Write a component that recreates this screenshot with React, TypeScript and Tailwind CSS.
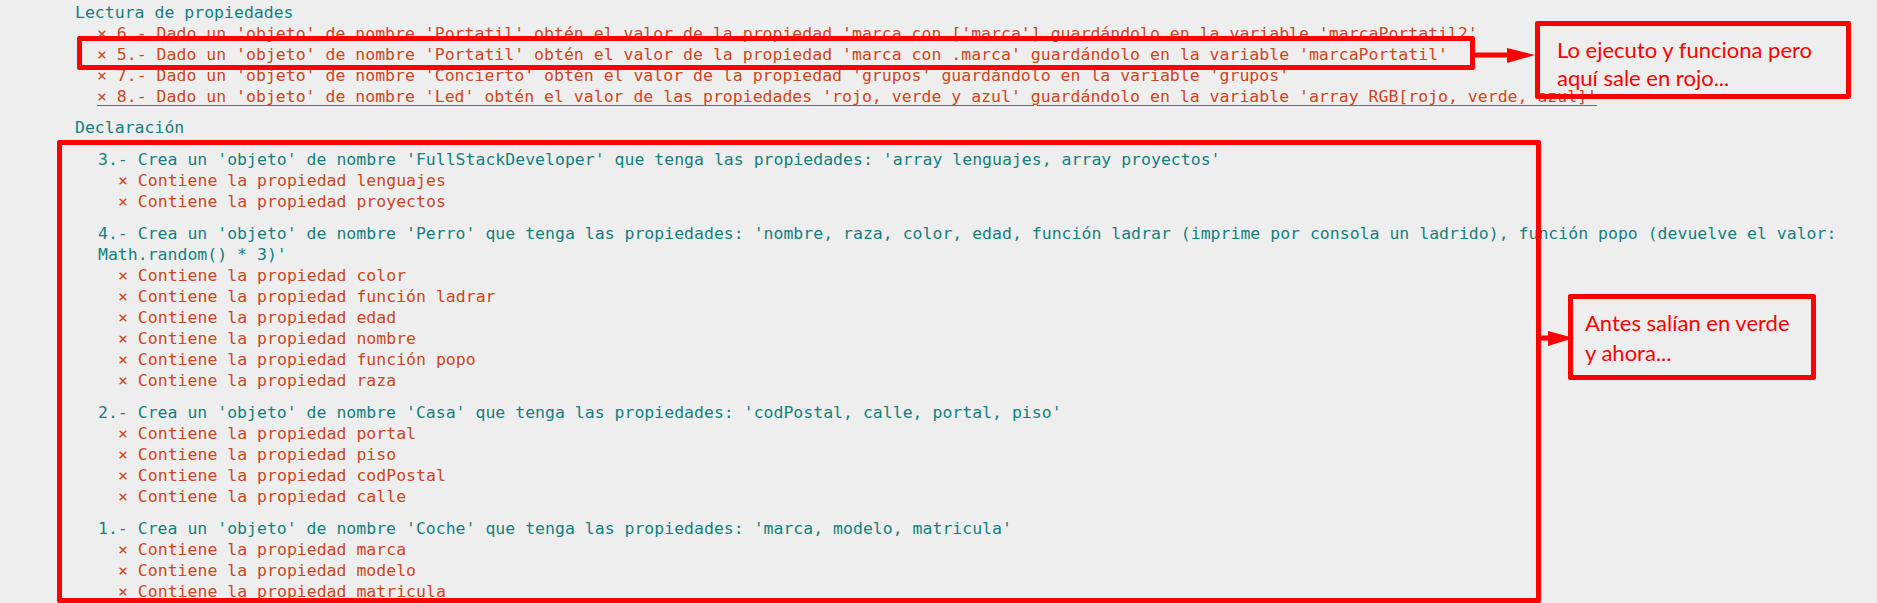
import React from "react";

const TEAL = "text-[#13807f]";
const RED = "text-[#cc4622]";

type Group = { title: string; items: string[] };

const lectura = [
  { text: "× 6.- Dado un 'objeto' de nombre 'Portatil' obtén el valor de la propiedad 'marca con ['marca'] guardándolo en la variable 'marcaPortatil2'", u: false },
  { text: "× 5.- Dado un 'objeto' de nombre 'Portatil' obtén el valor de la propiedad 'marca con .marca' guardándolo en la variable 'marcaPortatil'", u: false },
  { text: "× 7.- Dado un 'objeto' de nombre 'Concierto' obtén el valor de la propiedad 'grupos' guardándolo en la variable 'grupos'", u: false },
  { text: "× 8.- Dado un 'objeto' de nombre 'Led' obtén el valor de las propiedades 'rojo, verde y azul' guardándolo en la variable 'array RGB[rojo, verde, azul]'", u: true },
];

const groups: Group[] = [
  {
    title: "3.- Crea un 'objeto' de nombre 'FullStackDeveloper' que tenga las propiedades: 'array lenguajes, array proyectos'",
    items: ["lenguajes", "proyectos"],
  },
  {
    title: "4.- Crea un 'objeto' de nombre 'Perro' que tenga las propiedades: 'nombre, raza, color, edad, función ladrar (imprime por consola un ladrido), función popo (devuelve el valor: Math.random() * 3)'",
    items: ["color", "función ladrar", "edad", "nombre", "función popo", "raza"],
  },
  {
    title: "2.- Crea un 'objeto' de nombre 'Casa' que tenga las propiedades: 'codPostal, calle, portal, piso'",
    items: ["portal", "piso", "codPostal", "calle"],
  },
  {
    title: "1.- Crea un 'objeto' de nombre 'Coche' que tenga las propiedades: 'marca, modelo, matricula'",
    items: ["marca", "modelo", "matricula"],
  },
];

export default function App() {
  return (
    <div className="relative min-h-[603px] h-[603px] overflow-hidden bg-[#eeeeee]">
      <div className="font-['DejaVu_Sans_Mono',monospace] text-[16.5px] leading-[21px] pl-[75px] pt-[2px] pr-[16px]">
        <section>
          <div className={TEAL}>Lectura de propiedades</div>
          <ul className="pl-[22px]">
            {lectura.map((l, i) => (
              <li key={i} className={`${RED} whitespace-nowrap ${l.u ? "underline decoration-1 underline-offset-[3px]" : ""}`}>
                {l.text}
              </li>
            ))}
          </ul>
        </section>
        <section className="mt-[10px]">
          <div className={TEAL}>Declaración</div>
          <div className="pl-[23px]">
            {groups.map((g, i) => (
              <div key={i} className="mt-[11px]">
                <div className={TEAL}>{g.title}</div>
                <ul className="pl-[20px]">
                  {g.items.map((it, j) => (
                    <li key={j} className={RED}>
                      × Contiene la propiedad {it}
                    </li>
                  ))}
                </ul>
              </div>
            ))}
          </div>
        </section>
      </div>

      {/* annotations */}
      <div className="absolute left-[77px] top-[36px] w-[1398px] h-[34px] border-[5px] border-[#ff0000] rounded-[2px]" />
      <svg className="absolute left-[1470px] top-[44px]" width="70" height="24" viewBox="0 0 70 24">
        <rect x="0" y="8.5" width="40" height="5" fill="#ff0000" />
        <polygon points="37,4 65,11 37,19" fill="#ff0000" />
      </svg>
      <div className="absolute left-[1535px] top-[21px] w-[316px] h-[78px] border-[5px] border-[#ff0000] rounded-[2px] pl-[17px] pt-[10px] font-['Lato',sans-serif] text-[22px] leading-[28px] text-[#ff0000]">
        <div>Lo ejecuto y funciona pero</div>
        <div>aquí sale en rojo...</div>
      </div>

      <div className="absolute left-[57px] top-[140px] w-[1484px] h-[463px] border-[5px] border-[#ff0000] rounded-[2px]" />
      <svg className="absolute left-[1540px] top-[326px]" width="40" height="24" viewBox="0 0 40 24">
        <rect x="0" y="9.5" width="12" height="5" fill="#ff0000" />
        <polygon points="8,5 34,12 8,20" fill="#ff0000" />
      </svg>
      <div className="absolute left-[1568px] top-[294px] w-[248px] h-[86px] border-[5px] border-[#ff0000] rounded-[2px] pl-[12px] pt-[9px] font-['Lato',sans-serif] text-[22px] leading-[30px] text-[#ff0000]">
        <div>Antes salían en verde</div>
        <div>y ahora...</div>
      </div>
    </div>
  );
}
